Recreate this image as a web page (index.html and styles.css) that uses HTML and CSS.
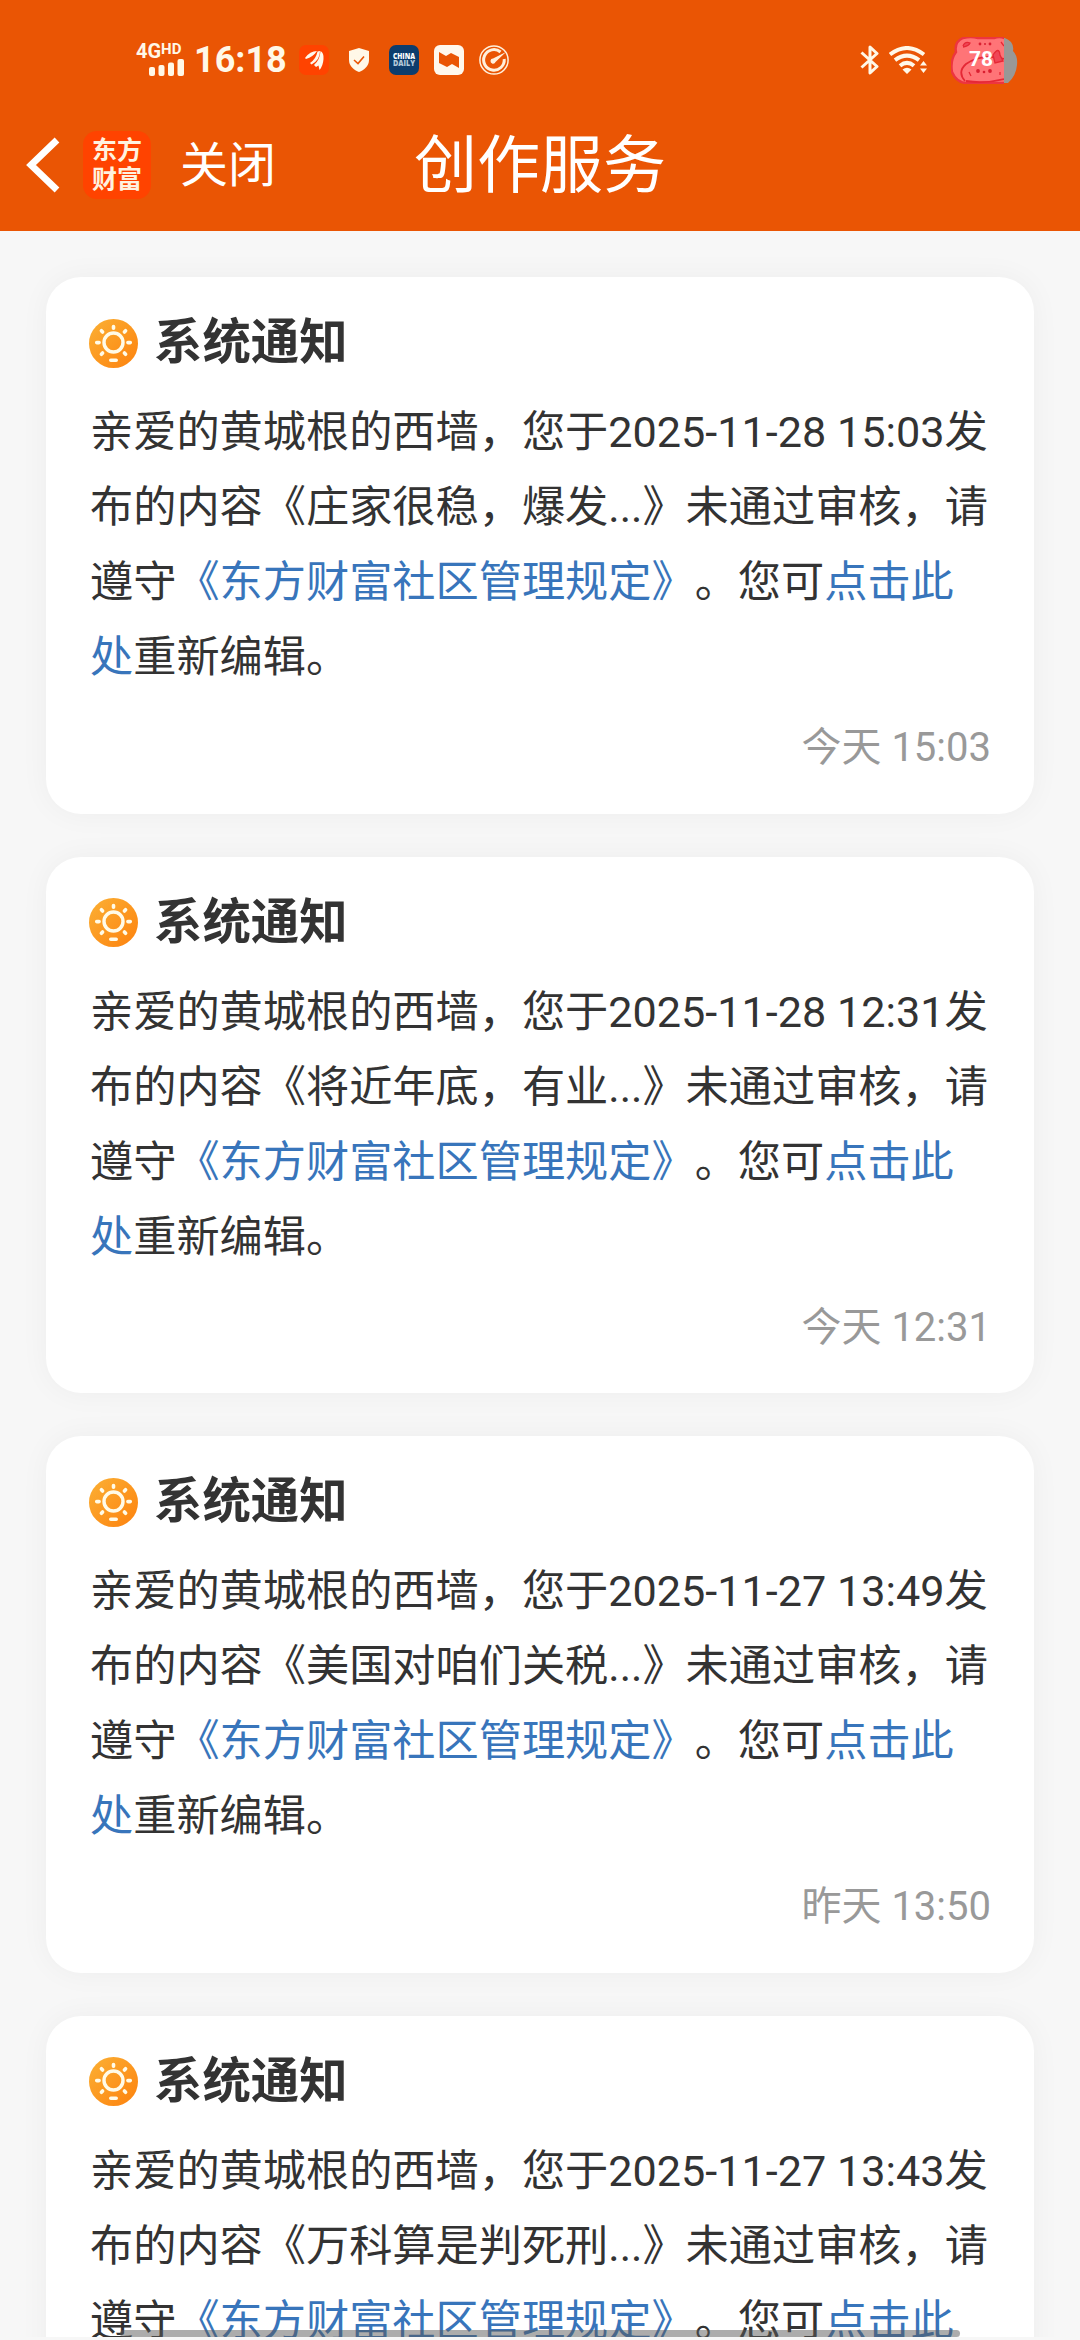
FILE: index.html
```html
<!DOCTYPE html>
<html lang="zh-CN">
<head>
<meta charset="utf-8">
<title>创作服务</title>
<link rel="stylesheet" href="styles.css">
</head>
<body>
<svg width="0" height="0" class="defs">
  <defs>
    <linearGradient id="sun-fill" x1="0" y1="0" x2="1" y2="1"><stop offset="0" stop-color="#fbb034"/><stop offset="1" stop-color="#fd820e"/></linearGradient>
    <symbol id="sun" viewBox="0 0 49 49">
      <circle cx="24.5" cy="24.5" r="24.5" fill="url(#sun-fill)"/>
      <g fill="none" stroke="#fffbe8" stroke-linecap="round">
        <circle cx="24.5" cy="23.5" r="9.5" stroke-width="3.4"/>
        <path stroke-width="3.6" d="M24.5 7.5v1.8M12.4 11.7l1.2 1.3M36.6 11.7l-1.2 1.3M7.7 23.6h2.4M38.9 23.6h2.4M12.4 35.3l1.2-1.3M36.6 35.3l-1.2-1.3M21.8 41.2h5.4"/>
      </g>
    </symbol>
  </defs>
</svg>
<div class="screen">
  <header class="header">
    <div class="status">
      <div class="network">
        <div class="network-label">4G<span class="hd">HD</span></div>
        <svg class="signal" width="35" height="17" viewBox="0 0 35 17"><g fill="#fff8e8"><rect x="0" y="8" width="6" height="9" rx="2"/><rect x="9.500" y="6" width="6" height="11" rx="2"/><rect x="19" y="3.500" width="6" height="13.500" rx="2"/><rect x="28.500" y="0" width="6.500" height="17" rx="2"/></g></svg>
      </div>
      <div class="clock">16:18</div>
      <div class="apps">
        <svg width="30" height="30" viewBox="0 0 30 30"><rect width="30" height="30" rx="7" fill="#ff4300"/><path d="M6 13Q11 6 18 6Q14 12 7 14ZM11 18Q17 14 18.500 6.500L21 6Q21 15 12.500 19.500ZM15 20Q21 15 21.500 6Q25 8 24.500 14Q24 21 20.500 25L19.500 20.500L17 22Z" fill="#fff8ed"/></svg>
        <svg width="30" height="30" viewBox="0 0 30 30"><path d="M15 3L25 6V15C25 21 20 25 15 27C10 25 5 21 5 15V6Z" fill="#fff8e8"/><path d="M10 15l4 3.500 6-7" fill="none" stroke="#ea5504" stroke-width="1.600"/></svg>
        <svg width="30" height="30" viewBox="0 0 30 30"><rect width="30" height="30" rx="7" fill="#0d3d6d"/><g font-family="Open Sans, sans-serif" font-weight="800" font-size="8"><text x="4" y="14" textLength="22" lengthAdjust="spacingAndGlyphs" fill="#fff">CHINA</text><text x="4" y="21" textLength="22" lengthAdjust="spacingAndGlyphs" fill="#b3c8d8">DAILY</text></g></svg>
        <svg width="30" height="30" viewBox="0 0 30 30"><rect width="30" height="30" rx="6" fill="#fff8ed"/><path d="M5 7L12 11L17 8L25 12V23L18 19L13 22L5 18Z" fill="#ea5504"/></svg>
        <svg width="30" height="30" viewBox="0 0 30 30"><g fill="none" stroke="#fff0dc"><circle cx="15" cy="15" r="14.100" stroke-width="1.500"/><path stroke-width="3" d="M21.500 7A10.300 10.300 0 1 0 25.200 14"/></g><path d="M27 7L16.500 17A2.600 2.600 0 1 1 14 13.500Z" fill="#fff0dc"/></svg>
      </div>
      <div class="device">
        <svg width="20" height="30" viewBox="0 0 20 30"><path d="M1.500 7.500L17 21.500L10 28V2L17 8.500L1.500 22.500" fill="none" stroke="#fff8e8" stroke-width="3" stroke-linejoin="round"/></svg>
        <svg class="wifi" width="38" height="28" viewBox="0 0 38 28"><g fill="none" stroke="#fff8e8" stroke-width="4"><path d="M1 8.500Q18 -4.500 35 8.500"/><path d="M6 14.200Q18 5 30 14.200"/><path d="M11 19.800Q18 14 25 19.800"/></g><path d="M13.500 23.500Q18 20 22.500 23.500L18 28ZM31 19.500L34.500 15L38 19.500ZM31 22.500H38L34.500 27Z" fill="#fff8e8"/></svg>
        <svg width="67" height="47" viewBox="0 0 67 47">
          <defs><clipPath id="level"><rect width="53" height="47"/></clipPath></defs>
          <path d="M12 1Q20-1 27 1H43Q52-2 60 5Q63 9 62 14Q67 19 66 28Q65 39 57 46H18Q6 47 1 35Q-1 23 5 15Q3 5 12 1Z" fill="#999896"/>
          <g clip-path="url(#level)">
            <path d="M12 1Q20-1 27 1H43Q52-2 60 5Q63 9 62 14Q67 19 66 28Q65 39 57 46H18Q6 47 1 35Q-1 23 5 15Q3 5 12 1Z" fill="#ff7477" stroke="#ed3540" stroke-width="2.400"/>
            <path d="M14 44Q6 35 15 27Q31 16 53 22M15 44Q33 47 53 42" fill="none" stroke="#e52835" stroke-width="1.800"/>
            <path d="M12 9Q14 4 19 6Q18 9 12 10M42 18Q48 9 49 18L52 24L44 26ZM18 35l2 4M49 35v3M50 5l3 4" fill="#ef4656" stroke="#e52835" stroke-width="1.300"/>
            <g fill="#d91f30"><circle cx="29" cy="7" r="1.400"/><circle cx="34" cy="7" r="1"/><circle cx="39" cy="7" r="1.400"/><circle cx="27" cy="34" r="1.900"/><circle cx="33" cy="35" r="1.300"/><circle cx="39" cy="34" r="1.900"/></g>
          </g>
          <text x="30" y="29" text-anchor="middle" font-family="Roboto, sans-serif" font-weight="700" font-size="21" fill="#fff">78</text>
        </svg>
      </div>
    </div>
    <nav class="nav">
      <div class="nav-left">
        <svg width="34" height="56" viewBox="0 0 34 56"><path d="M31 3L5 28L31 53" fill="none" stroke="#fff" stroke-width="6.800"/></svg>
        <div class="logo"><span>东方</span><span>财富</span></div>
        <span class="close">关闭</span>
      </div>
      <h1 class="nav-title">创作服务</h1>
      <div></div>
    </nav>
  </header>
  <main class="list">
    <article class="card">
      <h2 class="card-title"><svg class="sun"><use href="#sun"/></svg>系统通知</h2>
      <p class="body">亲爱的黄城根的西墙，您于2025-11-28 15:03发<br>布的内容《庄家很稳，爆发...》未通过审核，请<br>遵守<a>《东方财富社区管理规定》</a>。您可<a>点击此<br>处</a>重新编辑。</p>
      <time class="time">今天 15:03</time>
    </article>
    <article class="card">
      <h2 class="card-title"><svg class="sun"><use href="#sun"/></svg>系统通知</h2>
      <p class="body">亲爱的黄城根的西墙，您于2025-11-28 12:31发<br>布的内容《将近年底，有业...》未通过审核，请<br>遵守<a>《东方财富社区管理规定》</a>。您可<a>点击此<br>处</a>重新编辑。</p>
      <time class="time">今天 12:31</time>
    </article>
    <article class="card">
      <h2 class="card-title"><svg class="sun"><use href="#sun"/></svg>系统通知</h2>
      <p class="body">亲爱的黄城根的西墙，您于2025-11-27 13:49发<br>布的内容《美国对咱们关税...》未通过审核，请<br>遵守<a>《东方财富社区管理规定》</a>。您可<a>点击此<br>处</a>重新编辑。</p>
      <time class="time">昨天 13:50</time>
    </article>
    <article class="card">
      <h2 class="card-title"><svg class="sun"><use href="#sun"/></svg>系统通知</h2>
      <p class="body">亲爱的黄城根的西墙，您于2025-11-27 13:43发<br>布的内容《万科算是判死刑...》未通过审核，请<br>遵守<a>《东方财富社区管理规定》</a>。您可<a>点击此</a></p>
    </article>
  </main>
  <div class="home-bar"></div>
</div>
</body>
</html>
```
FILE: styles.css
```css
* { box-sizing: border-box; }
body { margin: 0; background: #f7f7f7; font-family: Roboto, "Noto Sans CJK SC", sans-serif; color: #333; text-spacing-trim: space-all; }
svg { display: block; flex: none; }
.defs { position: absolute; }
.screen { position: relative; height: 2340px; padding-bottom: 3px; overflow: hidden; display: flex; flex-direction: column; }
.header { height: 231px; flex: none; background: #ea5504; color: #fff8e8; display: flex; flex-direction: column; }
.status { height: 120px; padding: 0 62px 0 136px; display: flex; align-items: center; }
.network { width: 48px; height: 32px; display: flex; flex-direction: column; justify-content: space-between; align-items: flex-end; }
.network-label { width: 48px; height: 14px; font-size: 20px; line-height: 15px; font-weight: 700; white-space: nowrap; display: flex; }
.hd { font-size: 15px; line-height: 10px; }
.clock { width: 105px; margin-left: 10px; font-size: 36px; font-weight: 700; line-height: 40px; }
.apps { display: flex; gap: 15px; }
.device { margin-left: auto; display: flex; align-items: center; }
.wifi { margin: 0 24px 0 9px; }
.nav { height: 90px; display: grid; grid-template-columns: 1fr auto 1fr; align-items: center; color: #fff; }
.nav-left { display: flex; align-items: center; padding-left: 26px; }
.logo { width: 68px; height: 68px; margin-left: 23px; border-radius: 14px; background: #ff4300; display: flex; flex-direction: column; align-items: center; justify-content: center; font-size: 25px; line-height: 29px; font-weight: 700; color: #fff2df; }
.close { margin-left: 29px; padding-top: 2px; font-size: 48px; line-height: 60px; }
.nav-title { margin: 0; padding-top: 2px; font-size: 63px; line-height: 80px; font-weight: 400; }
.list { flex: 1; min-height: 0; overflow: hidden; padding: 46px 46px 0; display: flex; flex-direction: column; gap: 43px; }
.card { height: 536.67px; flex: none; padding: 31px 43px 0; border-radius: 35px; background: #fff; box-shadow: 0 0 30px rgba(0, 0, 0, 0.045); display: flex; flex-direction: column; }
.card-title { margin: 0; height: 70px; display: flex; align-items: center; gap: 16px; font-size: 48.4px; line-height: 68px; font-weight: 700; }
.sun { width: 49px; height: 49px; }
.body { margin: 17px 0 0 1px; font-size: 43.2px; line-height: 75px; white-space: nowrap; }
.body a { color: #3875bb; }
.time { margin-top: 23px; align-self: flex-end; font-size: 40px; line-height: 60px; color: #999; }
.home-bar { position: absolute; left: 120px; bottom: 3px; width: 840px; height: 7px; border-radius: 4px; background: rgba(90, 90, 90, 0.5); }
```
